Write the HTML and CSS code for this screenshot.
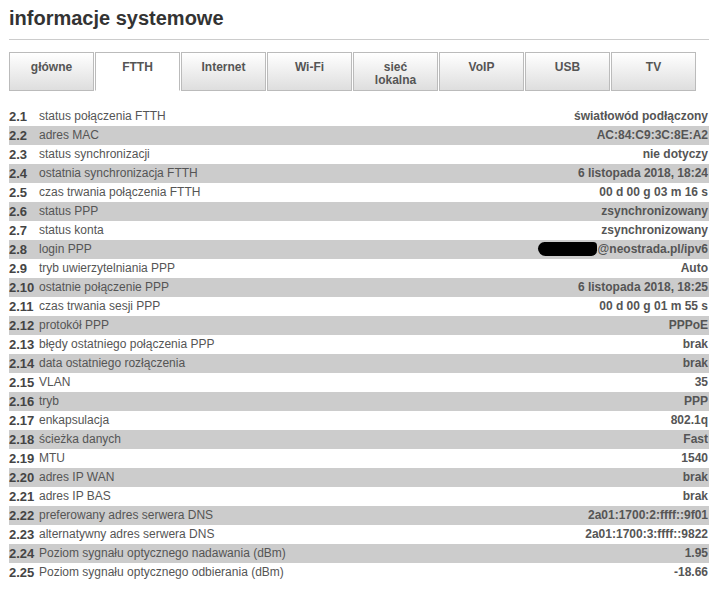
FILE: index.html
```html
<!DOCTYPE html>
<html lang="pl">
<head>
    <meta charset="UTF-8">
    <title>informacje systemowe</title>
    <link rel="stylesheet" href="styles.css">
</head>
<body>
    <div class="page">
        <div class="header">
            <h1>informacje systemowe</h1>
        </div>

        <div class="tabs">
            <div class="tab">główne</div>
            <div class="tab active">FTTH</div>
            <div class="tab">Internet</div>
            <div class="tab">Wi-Fi</div>
            <div class="tab">sieć<br>lokalna</div>
            <div class="tab">VoIP</div>
            <div class="tab">USB</div>
            <div class="tab">TV</div>
        </div>

        <div class="info">
            <div class="row"><span class="num">2.1</span><span class="label">status połączenia FTTH</span><span class="value">światłowód podłączony</span></div>
            <div class="row"><span class="num">2.2</span><span class="label">adres MAC</span><span class="value">AC:84:C9:3C:8E:A2</span></div>
            <div class="row"><span class="num">2.3</span><span class="label">status synchronizacji</span><span class="value">nie dotyczy</span></div>
            <div class="row"><span class="num">2.4</span><span class="label">ostatnia synchronizacja FTTH</span><span class="value">6 listopada 2018, 18:24</span></div>
            <div class="row"><span class="num">2.5</span><span class="label">czas trwania połączenia FTTH</span><span class="value">00 d 00 g 03 m 16 s</span></div>
            <div class="row"><span class="num">2.6</span><span class="label">status PPP</span><span class="value">zsynchronizowany</span></div>
            <div class="row"><span class="num">2.7</span><span class="label">status konta</span><span class="value">zsynchronizowany</span></div>
            <div class="row"><span class="num">2.8</span><span class="label">login PPP</span><span class="value"><span class="redacted"></span>@neostrada.pl/ipv6</span></div>
            <div class="row"><span class="num">2.9</span><span class="label">tryb uwierzytelniania PPP</span><span class="value">Auto</span></div>
            <div class="row"><span class="num">2.10</span><span class="label">ostatnie połączenie PPP</span><span class="value">6 listopada 2018, 18:25</span></div>
            <div class="row"><span class="num">2.11</span><span class="label">czas trwania sesji PPP</span><span class="value">00 d 00 g 01 m 55 s</span></div>
            <div class="row"><span class="num">2.12</span><span class="label">protokół PPP</span><span class="value">PPPoE</span></div>
            <div class="row"><span class="num">2.13</span><span class="label">błędy ostatniego połączenia PPP</span><span class="value">brak</span></div>
            <div class="row"><span class="num">2.14</span><span class="label">data ostatniego rozłączenia</span><span class="value">brak</span></div>
            <div class="row"><span class="num">2.15</span><span class="label">VLAN</span><span class="value">35</span></div>
            <div class="row"><span class="num">2.16</span><span class="label">tryb</span><span class="value">PPP</span></div>
            <div class="row"><span class="num">2.17</span><span class="label">enkapsulacja</span><span class="value">802.1q</span></div>
            <div class="row"><span class="num">2.18</span><span class="label">ścieżka danych</span><span class="value">Fast</span></div>
            <div class="row"><span class="num">2.19</span><span class="label">MTU</span><span class="value">1540</span></div>
            <div class="row"><span class="num">2.20</span><span class="label">adres IP WAN</span><span class="value">brak</span></div>
            <div class="row"><span class="num">2.21</span><span class="label">adres IP BAS</span><span class="value">brak</span></div>
            <div class="row"><span class="num">2.22</span><span class="label">preferowany adres serwera DNS</span><span class="value">2a01:1700:2:ffff::9f01</span></div>
            <div class="row"><span class="num">2.23</span><span class="label">alternatywny adres serwera DNS</span><span class="value">2a01:1700:3:ffff::9822</span></div>
            <div class="row"><span class="num">2.24</span><span class="label">Poziom sygnału optycznego nadawania (dBm)</span><span class="value">1.95</span></div>
            <div class="row"><span class="num">2.25</span><span class="label">Poziom sygnału optycznego odbierania (dBm)</span><span class="value">-18.66</span></div>
        </div>
    </div>
</body>
</html>
```

FILE: styles.css
```css
* {
    margin: 0;
    padding: 0;
    box-sizing: border-box;
}

body {
    background-color: #fff;
    font-family: 'Liberation Sans', Arial, sans-serif;
    font-size: 12px;
    color: #555;
}

.page {
    width: 700px;
    margin-left: 9px;
}

.header {
    height: 40px;
    padding-top: 6px;
    border-bottom: 1px solid #ccc;
}

.header h1 {
    font-size: 20px;
    line-height: 24px;
    font-weight: bold;
    color: #333;
}

.tabs {
    display: flex;
    gap: 1px;
    margin-top: 12px;
}

.tab {
    width: 85px;
    height: 39px;
    padding-top: 8px;
    border: 1px solid #bbb;
    background: linear-gradient(#fff, #dedede);
    text-align: center;
    font-weight: bold;
    line-height: 13px;
    color: #555;
}

.tab.active {
    background: #fff;
    border-bottom-color: #fff;
}

.info {
    margin-top: 16px;
}

.row {
    display: flex;
    height: 19px;
    line-height: 19px;
}

.row:nth-child(even) {
    background-color: #ccc;
}

.num {
    width: 30px;
    font-weight: bold;
    font-size: 13px;
    color: #444;
}

.label {
    flex: 1;
}

.value {
    font-weight: bold;
    padding-right: 1px;
    text-align: right;
}

.redacted {
    display: inline-block;
    width: 59px;
    height: 14px;
    margin-right: 1px;
    vertical-align: -3px;
    background-color: #000;
    border-radius: 7px 4px 6px 8px;
}
```
